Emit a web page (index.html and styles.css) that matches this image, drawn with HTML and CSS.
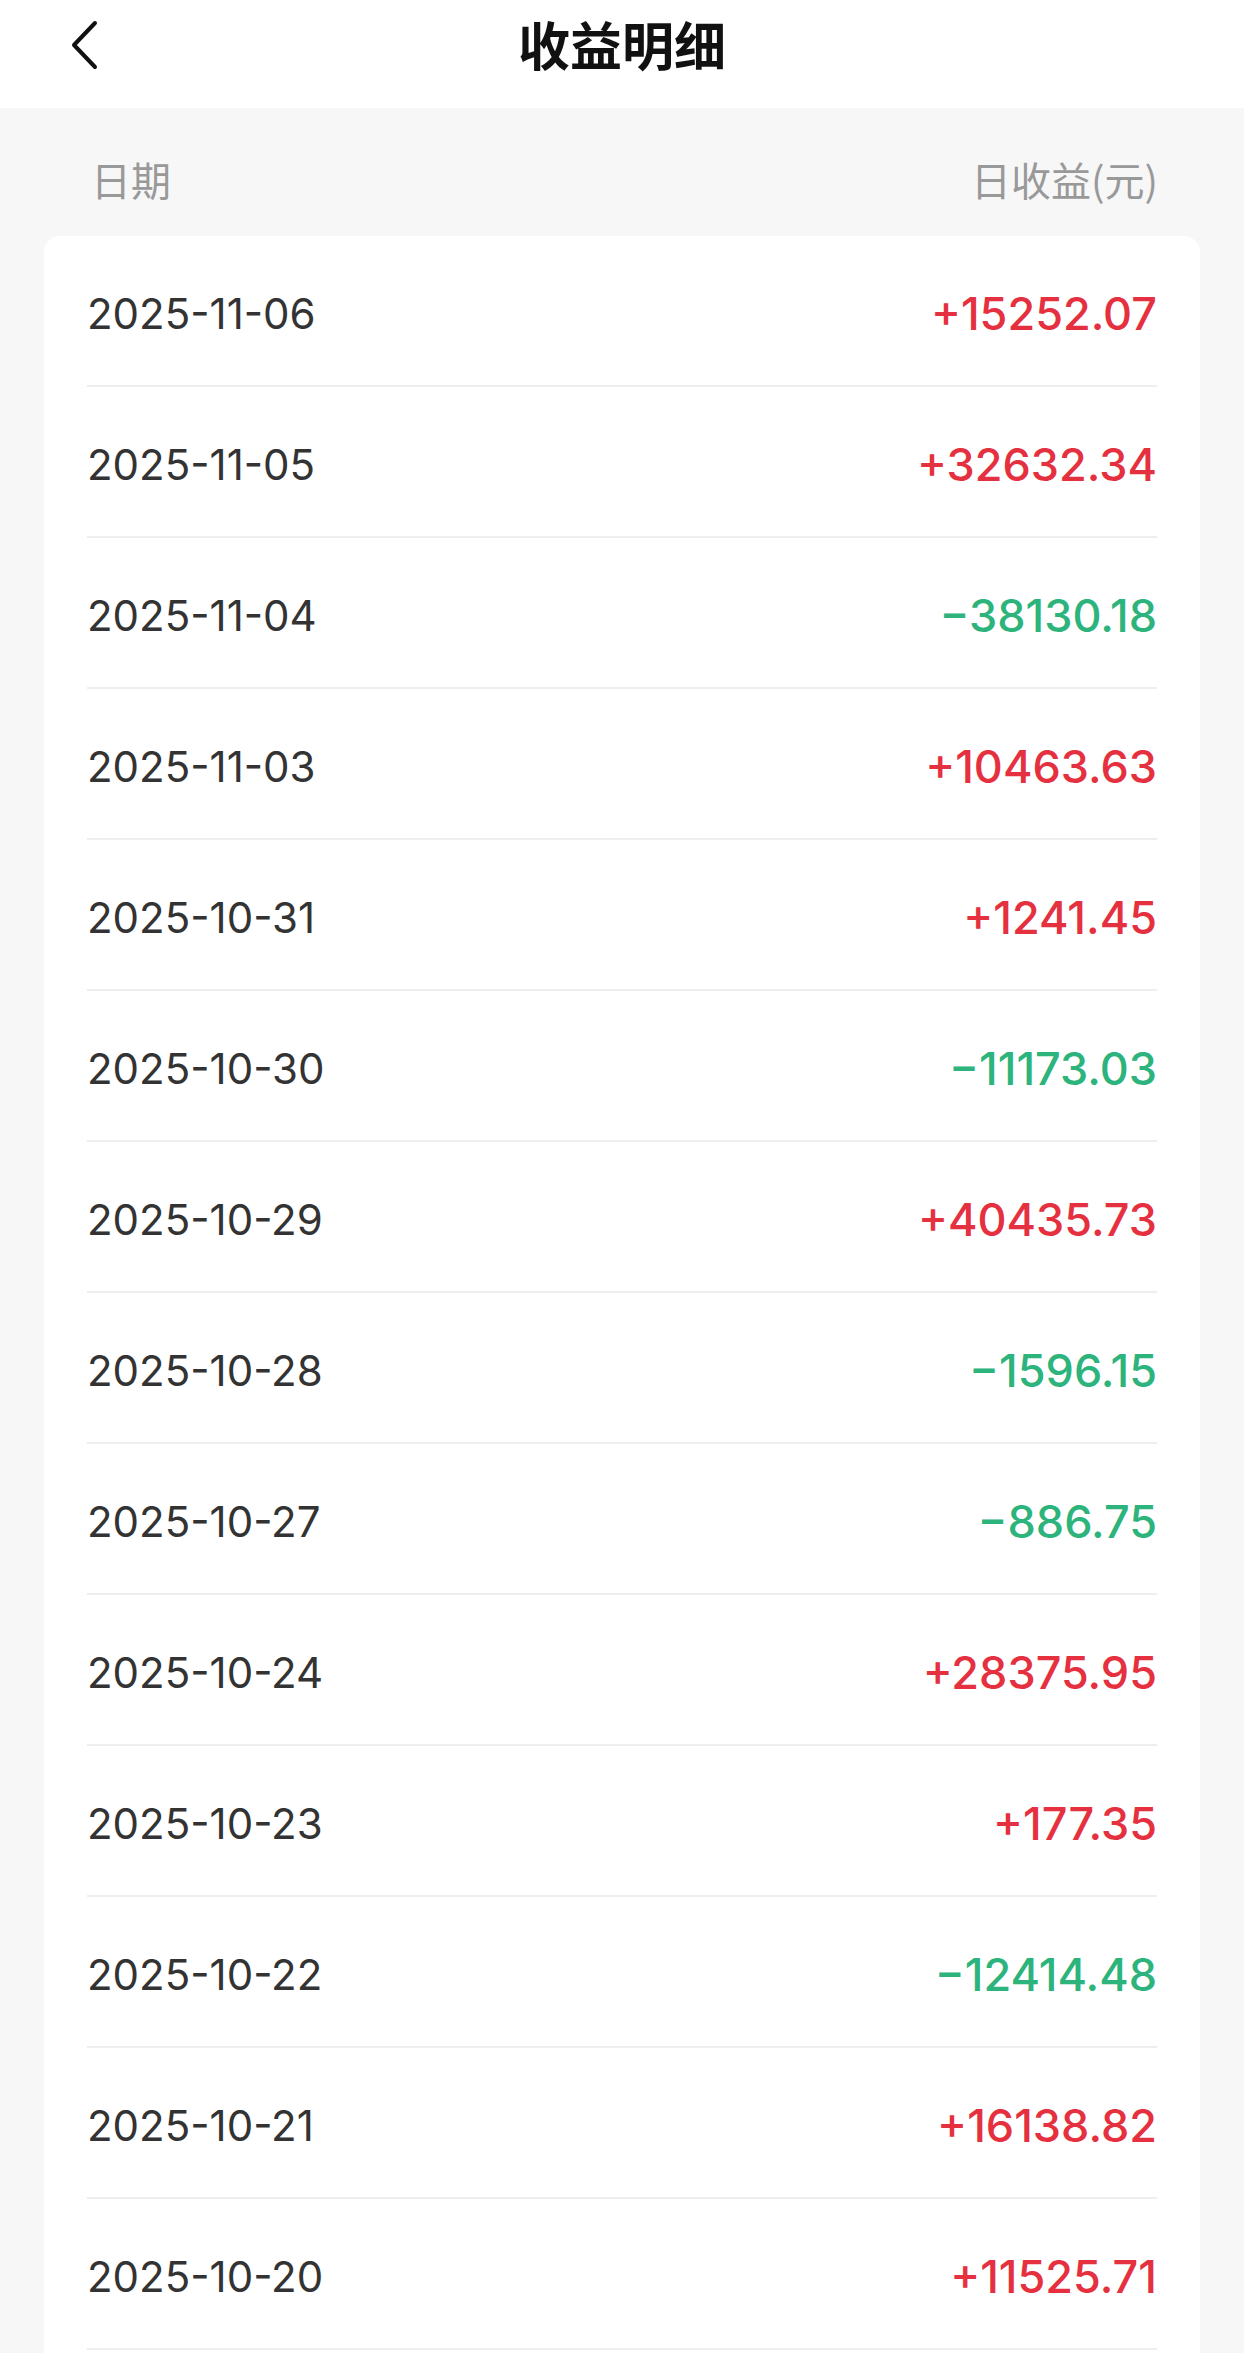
FILE: index.html
```html
<!DOCTYPE html>
<html lang="zh-CN">
<head>
    <meta charset="utf-8">
    <title>收益明细</title>
    <link rel="stylesheet" href="styles.css">
</head>
<body>
    <div class="header">
        <div class="back">
            <svg width="30" height="50" viewBox="0 0 30 50">
                <polyline points="25,3 4,25 25,47" fill="none" stroke="#111" stroke-width="4" stroke-linecap="round" stroke-linejoin="round"/>
            </svg>
        </div>
        <h1>收益明细</h1>
        <div></div>
    </div>

    <div class="col-head">
        <span>日期</span>
        <span>日收益(元)</span>
    </div>

    <div class="card">
        <div class="row"><span class="date">2025-11-06</span><span class="amount up">+15252.07</span></div>
        <div class="row"><span class="date">2025-11-05</span><span class="amount up">+32632.34</span></div>
        <div class="row"><span class="date">2025-11-04</span><span class="amount down">−38130.18</span></div>
        <div class="row"><span class="date">2025-11-03</span><span class="amount up">+10463.63</span></div>
        <div class="row"><span class="date">2025-10-31</span><span class="amount up">+1241.45</span></div>
        <div class="row"><span class="date">2025-10-30</span><span class="amount down">−11173.03</span></div>
        <div class="row"><span class="date">2025-10-29</span><span class="amount up">+40435.73</span></div>
        <div class="row"><span class="date">2025-10-28</span><span class="amount down">−1596.15</span></div>
        <div class="row"><span class="date">2025-10-27</span><span class="amount down">−886.75</span></div>
        <div class="row"><span class="date">2025-10-24</span><span class="amount up">+28375.95</span></div>
        <div class="row"><span class="date">2025-10-23</span><span class="amount up">+177.35</span></div>
        <div class="row"><span class="date">2025-10-22</span><span class="amount down">−12414.48</span></div>
        <div class="row"><span class="date">2025-10-21</span><span class="amount up">+16138.82</span></div>
        <div class="row"><span class="date">2025-10-20</span><span class="amount up">+11525.71</span></div>
    </div>
</body>
</html>
```

FILE: styles.css
```css
body {
    margin: 0;
    background: #f7f7f7;
    font-family: Inter, "Noto Sans CJK SC", sans-serif;
}
.header {
    height: 108px;
    background: #fff;
    display: grid;
    grid-template-columns: 1fr auto 1fr;
    align-items: center;
}
.back {
    padding-left: 70px;
    display: flex;
    align-items: center;
    margin-top: -18px;
}
.header h1 {
    margin: 0;
    margin-top: -22px;
    font-family: "Noto Sans CJK SC", sans-serif;
    font-size: 52px;
    font-weight: 700;
    color: #111;
}
.col-head {
    height: 128px;
    box-sizing: border-box;
    padding: 14px 86px 0 91px;
    display: flex;
    justify-content: space-between;
    align-items: center;
    font-family: "Noto Sans CJK SC", sans-serif;
    font-size: 40px;
    color: #999;
}
.card {
    margin: 0 44px;
    padding: 0 43px;
    background: #fff;
    border-radius: 16px;
    min-height: 2140px;
}
.row {
    height: 151px;
    box-sizing: border-box;
    padding-top: 6px;
    border-bottom: 2px solid #eeeeee;
    display: flex;
    justify-content: space-between;
    align-items: center;
}
.date {
    font-size: 42px;
    color: #333;
}
.amount {
    font-size: 45px;
    font-weight: 500;
}
.up {
    color: #e5303f;
}
.down {
    color: #2db37c;
}
```
